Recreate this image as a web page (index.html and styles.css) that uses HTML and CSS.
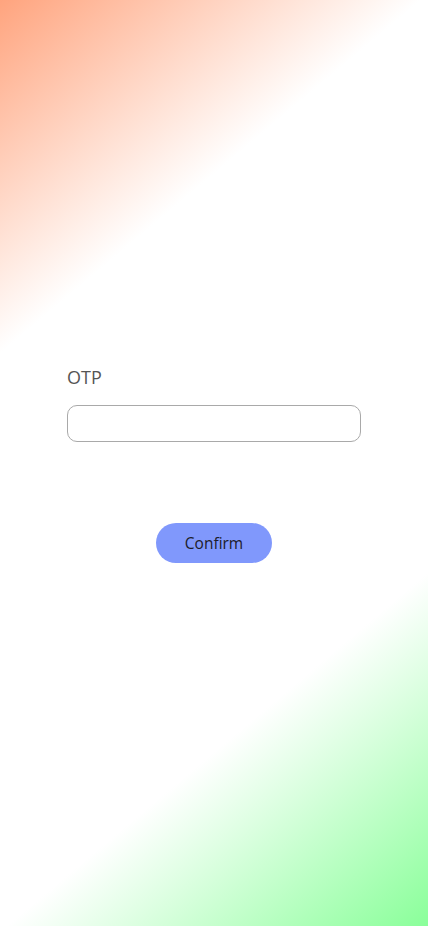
FILE: index.html
```html
<!DOCTYPE html>
<html lang="en">
<head>
<meta charset="utf-8">
<meta name="viewport" content="width=device-width, initial-scale=1">
<title>OTP</title>
<link rel="stylesheet" href="styles.css">
</head>
<body>
<main class="page">
  <form class="otp-form">
    <label class="otp-label" for="otp">OTP</label>
    <input class="otp-input" id="otp" type="text">
    <div class="actions">
      <button class="confirm-btn" type="button">Confirm</button>
    </div>
  </form>
</main>
</body>
</html>
```
FILE: styles.css
```css
html, body {
  margin: 0;
  padding: 0;
  height: 100%;
}
body {
  font-family: "Open Sans", "Noto Sans", sans-serif;
  background: linear-gradient(140deg, #ffa47e 0%, #ffffff 27.5%, #ffffff 72.5%, #8aff9a 100%);
}
.page {
  min-height: 926px;
  display: flex;
  justify-content: center;
  box-sizing: border-box;
  padding-top: 364px;
}
.otp-form {
  width: 294px;
  display: flex;
  flex-direction: column;
}
.otp-label {
  font-size: 18px;
  line-height: 26px;
  color: #555;
  margin-bottom: 15px;
}
.otp-input {
  box-sizing: border-box;
  height: 37px;
  width: 100%;
  border: 1px solid #a9a9a9;
  border-radius: 10px;
  background: #fff;
  outline: none;
  font-size: 16px;
  padding: 0 12px;
}
.actions {
  display: flex;
  justify-content: center;
  margin-top: 81px;
}
.confirm-btn {
  width: 116px;
  height: 40px;
  border: none;
  border-radius: 20px;
  background: #8098fc;
  color: #1c1c2a;
  font-family: "Open Sans", "Noto Sans", sans-serif;
  font-size: 15.5px;
  padding: 0;
  cursor: pointer;
}
```
